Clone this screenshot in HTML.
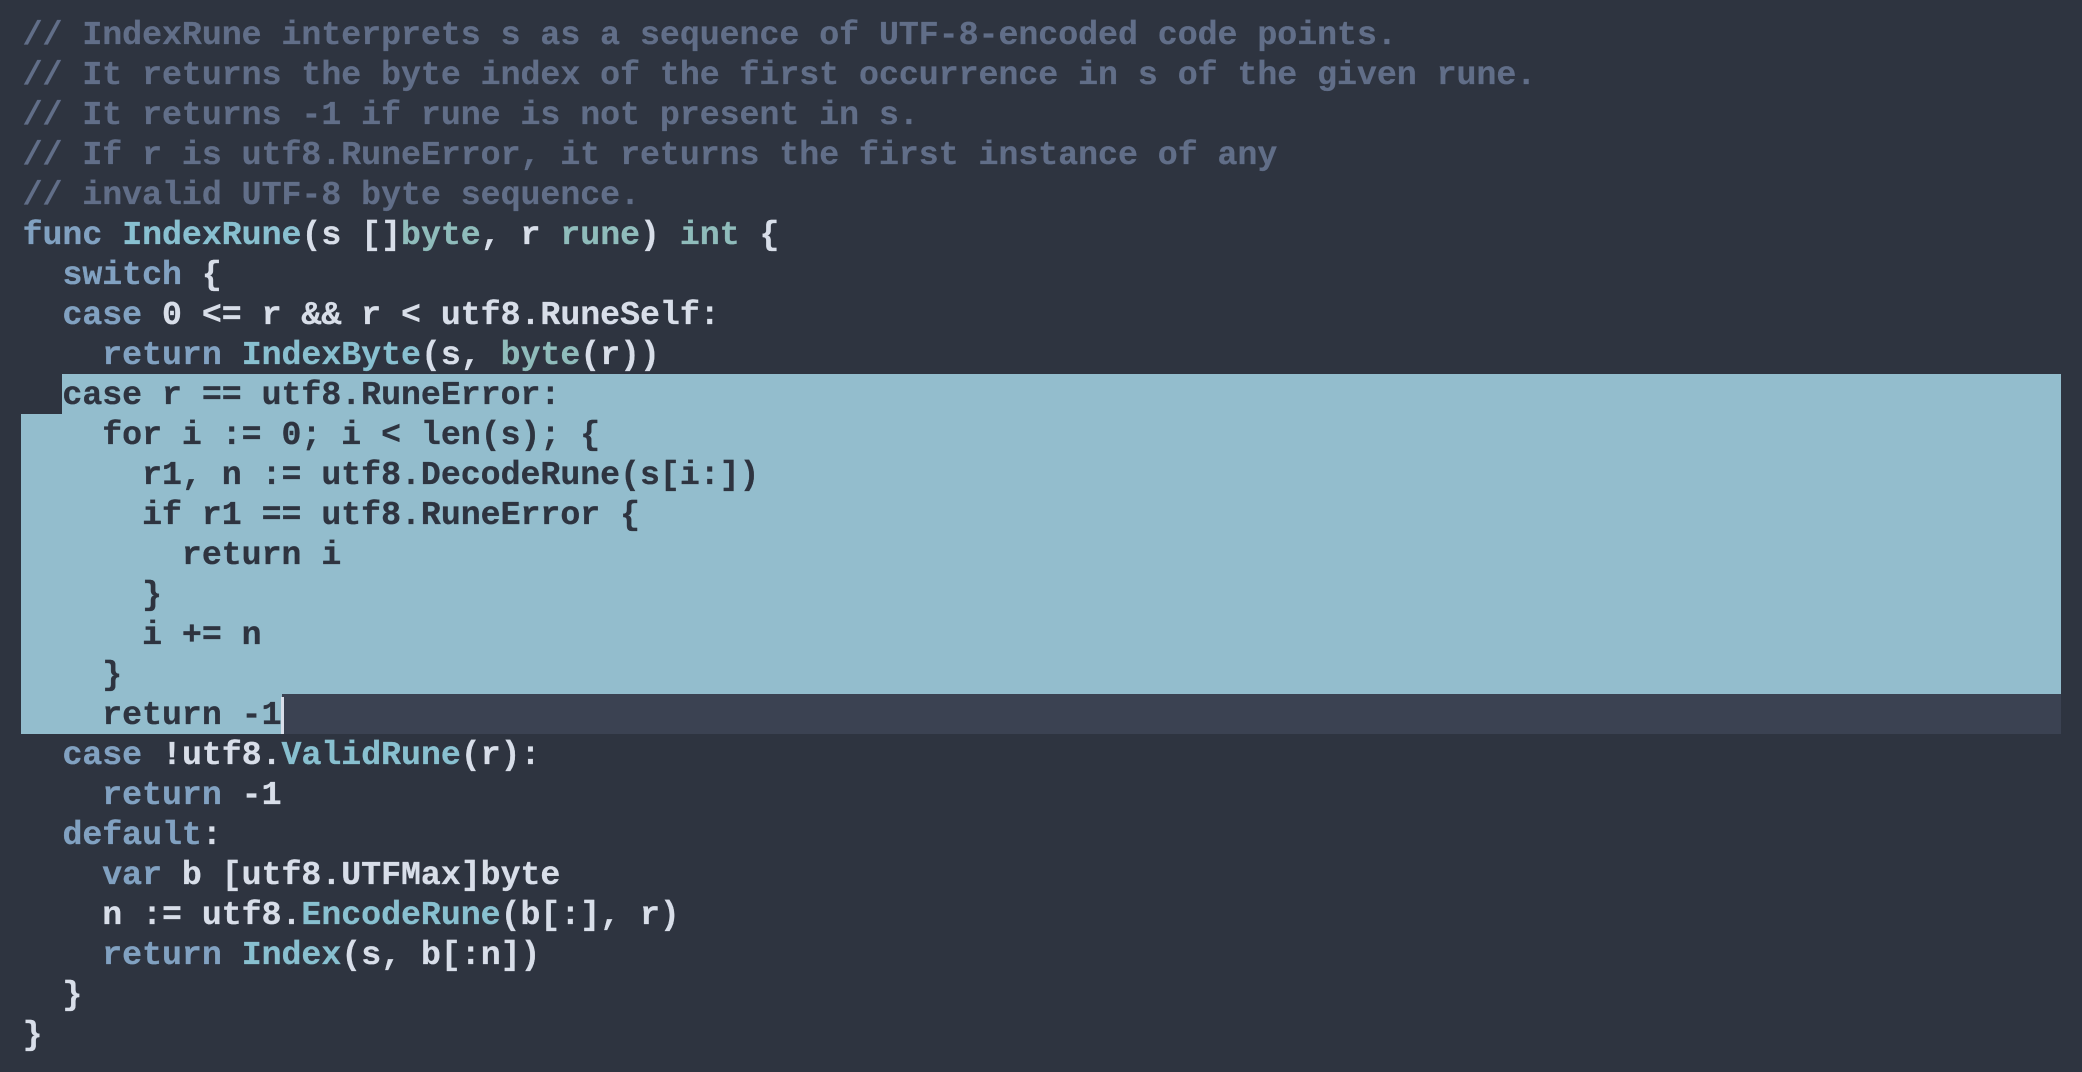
<!DOCTYPE html>
<html><head><meta charset="utf-8"><style>
html,body{margin:0;padding:0;background:#2e3440;width:2082px;height:1072px;overflow:hidden}
.sel{position:absolute;background:#93bdcd}
.cl{position:absolute;background:#3b4252}
pre{position:absolute;left:22.6px;top:14.5px;margin:0;font-family:"Liberation Mono",monospace;font-size:33.2px;font-weight:bold;line-height:40px;color:#d8dee9;-webkit-text-stroke:0.3px currentColor;z-index:2}
.c{color:#616e88}.k{color:#81a1c1}.f{color:#88c0d0}.t{color:#8fbcbb}
.s{color:#2e3440}
.cur{position:absolute;left:281px;top:697px;width:3px;height:37px;background:#d8dee9;z-index:3}
</style></head><body>
<div class="sel" style="left:62px;top:374px;width:1999px;height:40px"></div>
<div class="sel" style="left:21px;top:414px;width:2040px;height:280px"></div>
<div class="sel" style="left:21px;top:694px;width:261px;height:40px"></div>
<div class="cl" style="left:282px;top:694px;width:1779px;height:40px"></div>
<div class="cur"></div>
<pre><span class="c">// IndexRune interprets s as a sequence of UTF-8-encoded code points.
// It returns the byte index of the first occurrence in s of the given rune.
// It returns -1 if rune is not present in s.
// If r is utf8.RuneError, it returns the first instance of any
// invalid UTF-8 byte sequence.</span>
<span class="k">func</span> <span class="f">IndexRune</span>(s []<span class="t">byte</span>, r <span class="t">rune</span>) <span class="t">int</span> {
  <span class="k">switch</span> {
  <span class="k">case</span> 0 &lt;= r &amp;&amp; r &lt; utf8.RuneSelf:
    <span class="k">return</span> <span class="f">IndexByte</span>(s, <span class="t">byte</span>(r))
<span class="s">  case r == utf8.RuneError:
    for i := 0; i &lt; len(s); {
      r1, n := utf8.DecodeRune(s[i:])
      if r1 == utf8.RuneError {
        return i
      }
      i += n
    }
    return -1</span>
  <span class="k">case</span> !utf8.<span class="f">ValidRune</span>(r):
    <span class="k">return</span> -1
  <span class="k">default</span>:
    <span class="k">var</span> b [utf8.UTFMax]byte
    n := utf8.<span class="f">EncodeRune</span>(b[:], r)
    <span class="k">return</span> <span class="f">Index</span>(s, b[:n])
  }
}</pre>
</body></html>
